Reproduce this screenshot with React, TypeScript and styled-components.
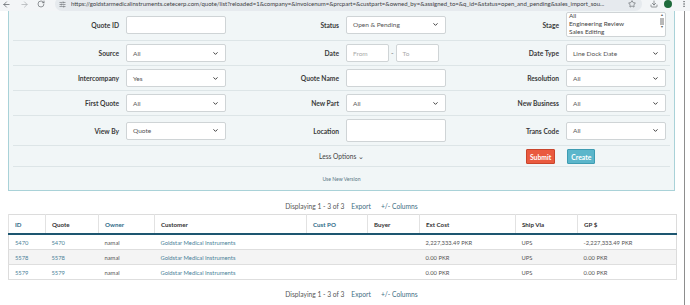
import React from 'react';
import styled, { createGlobalStyle } from 'styled-components';
import { ArrowLeft, ArrowRight, RotateCw, SlidersHorizontal, Star, Download, EllipsisVertical, ChevronDown } from 'lucide-react';

const GlobalStyle = createGlobalStyle`
  body {
    margin: 0;
    background: #ffffff;
    font-family: Lato, "Liberation Sans", sans-serif;
    color: #333333;
  }
`;

const LINK = '#2f6b88';

const Page = styled.div`
  width: 690px;
  height: 305px;
  overflow: hidden;
  background: #ffffff;
`;

const BrowserBar = styled.div`
  height: 11px;
  overflow: hidden;
  background: #f3f5f7;
`;

const BarInner = styled.div`
  height: 14px;
  margin-top: -3px;
  display: flex;
  align-items: center;
  padding: 0 2px;
  color: #5f6368;
`;

const NavIcon = styled.span<{ $gap?: number; $faded?: boolean }>`
  display: flex;
  margin-right: ${p => p.$gap ?? 8}px;
  opacity: ${p => (p.$faded ? 0.45 : 1)};
`;

const UrlPill = styled.div`
  width: 596px;
  height: 14px;
  margin-left: 4px;
  border-radius: 7px;
  background: #e6eaee;
  display: flex;
  align-items: center;
  padding: 0 6px 0 4px;
  box-sizing: border-box;
`;

const UrlText = styled.span`
  flex: 1;
  margin-left: 5px;
  font-size: 6px;
  line-height: 8px;
  color: #3c4043;
  white-space: nowrap;
  overflow: hidden;
`;

const Avatar = styled.span`
  width: 8px;
  height: 8px;
  border-radius: 50%;
  background: #1f6b3c;
  margin: 0 8px 0 6px;
`;

const Body = styled.div`
  display: flex;
`;

const Main = styled.div`
  width: 685px;
  height: 294px;
  border-right: 1px solid #8d8d8d;
  padding: 0 9px 0 8px;
  box-sizing: border-box;
`;

const FilterPanel = styled.div`
  background: #f1f6f7;
  border: 1px solid #a9d2d8;
  border-top: none;
  padding: 0 4px;
`;

const FilterRow = styled.div<{ $pad?: string }>`
  display: grid;
  grid-template-columns: 1fr 100px 1fr 100px 1fr 100px;
  column-gap: 7px;
  align-items: center;
  padding: ${p => p.$pad ?? '3px 4px 3px 0'};
  border-bottom: 1px solid #dde5e7;
`;

const Label = styled.label`
  text-align: right;
  font-size: 6.7px;
  font-weight: 700;
  color: #3a3a3a;
`;

const Box = styled.div<{ $h?: number }>`
  height: ${p => p.$h ?? 18}px;
  background: #ffffff;
  border: 1px solid #cfd4d6;
  border-radius: 2px;
  box-sizing: border-box;
  display: flex;
  align-items: center;
  padding: 0 6px;
  font-size: 6.5px;
  color: #555555;
`;

const SelectBox = styled(Box)`
  justify-content: space-between;
`;

const DateRange = styled.div`
  display: flex;
  align-items: center;
  gap: 2px;
  font-size: 7px;
  color: #777;
`;

const DateInput = styled(Box)`
  width: 43px;
  color: #a9a9a9;
`;

const ListBox = styled.div`
  height: 25px;
  background: #ffffff;
  border: 1px solid #cfd4d6;
  border-radius: 2px;
  box-sizing: border-box;
  display: flex;
  font-size: 6.4px;
  color: #444;
`;

const ListItems = styled.div`
  flex: 1;
  padding: 0 2px;
  line-height: 8px;
  margin-top: -1px;
`;

const ScrollBar = styled.div`
  width: 6px;
  display: flex;
  flex-direction: column;
  align-items: center;
  font-size: 3.5px;
  color: #666;
  line-height: 5px;
`;

const ScrollThumb = styled.div`
  width: 4px;
  height: 7px;
  background: #b8b8b8;
`;

const ActionRow = styled.div`
  display: grid;
  grid-template-columns: 1fr auto 1fr;
  align-items: center;
  padding: 3px 0 2px;
  border-bottom: 1px solid #dde5e7;
`;

const LessOptions = styled.span`
  grid-column: 2;
  font-size: 6.6px;
  color: #444;
`;

const Buttons = styled.div`
  display: flex;
  gap: 12px;
  padding-left: 162px;
`;

const Button = styled.button<{ $color: string; $border: string }>`
  height: 15px;
  padding: 0 3px;
  border: 1px solid ${p => p.$border};
  background: ${p => p.$color};
  color: #ffffff;
  font-family: inherit;
  font-size: 6.8px;
  font-weight: 700;
  border-radius: 1px;
`;

const VersionRow = styled.div`
  height: 23px;
  display: flex;
  align-items: center;
  justify-content: center;
  font-size: 5.1px;
  color: #5a7886;
`;

const Pager = styled.div<{ $top: number }>`
  margin-top: ${p => p.$top}px;
  height: 12px;
  display: flex;
  justify-content: center;
  align-items: center;
  padding-left: 20px;
  font-size: 6.7px;
  color: #555;
`;

const PagerLink = styled.span<{ $gap: number }>`
  margin-left: ${p => p.$gap}px;
  color: #3f6e84;
`;

const Table = styled.table`
  width: 100%;
  margin-top: 2px;
  border-collapse: collapse;
  table-layout: fixed;
  border: 1px solid #dcdcdc;
`;

const Col = styled.col<{ $w: number }>`
  width: ${p => p.$w}px;
`;

const Th = styled.th<{ $link?: boolean }>`
  height: 18px;
  padding: 0 0 0 6px;
  text-align: left;
  font-size: 6.2px;
  font-weight: 700;
  color: ${p => (p.$link ? LINK : '#333')};
  border-left: 1px solid #e2e2e2;
  border-bottom: 2px solid #1d5670;
`;

const Tr = styled.tr<{ $alt?: boolean }>`
  background: ${p => (p.$alt ? '#f4f4f4' : '#ffffff')};
  border-bottom: 1px solid #dedede;
`;

const Td = styled.td<{ $link?: boolean }>`
  height: 14px;
  padding: 0 0 0 6px;
  font-size: 5.8px;
  color: ${p => (p.$link ? '#4a7f98' : '#555')};
  white-space: nowrap;
`;

const columns = [
  { name: 'ID', w: 37, link: true },
  { name: 'Quote', w: 53 },
  { name: 'Owner', w: 56, link: true },
  { name: 'Customer', w: 152 },
  { name: 'Cust PO', w: 61, link: true },
  { name: 'Buyer', w: 52 },
  { name: 'Ext Cost', w: 96 },
  { name: 'Ship Via', w: 62 },
  { name: 'GP $', w: 99 },
];

const rows = [
  { id: '5470', cost: '2,227,333.49 PKR', gp: '-2,227,333.49 PKR' },
  { id: '5578', cost: '0.00 PKR', gp: '0.00 PKR' },
  { id: '5579', cost: '0.00 PKR', gp: '0.00 PKR' },
];

const Select = ({ value }: { value: string }) => (
  <SelectBox>
    <span>{value}</span>
    <ChevronDown size={7} strokeWidth={3.2} color="#333" />
  </SelectBox>
);

const PagerLine = ({ top }: { top: number }) => (
  <Pager $top={top}>
    Displaying 1 - 3 of 3
    <PagerLink $gap={7}>Export</PagerLink>
    <PagerLink $gap={10}>+/- Columns</PagerLink>
  </Pager>
);

export default function App() {
  return (
    <Page>
      <GlobalStyle />
      <BrowserBar>
        <BarInner>
          <NavIcon $gap={9}><ArrowLeft size={9} /></NavIcon>
          <NavIcon $gap={8} $faded><ArrowRight size={9} /></NavIcon>
          <NavIcon $gap={6}><RotateCw size={8} /></NavIcon>
          <UrlPill>
            <SlidersHorizontal size={7} />
            <UrlText>
              https://goldstarmedicalinstruments.cetecerp.com/quote/list?reloaded=1&amp;company=&amp;invoicenum=&amp;prcpart=&amp;custpart=&amp;owned_by=&amp;assigned_to=&amp;q_id=&amp;status=open_and_pending&amp;sales_import_sou...
            </UrlText>
            <Star size={8} />
          </UrlPill>
          <NavIcon $gap={0} style={{ marginLeft: 8 }}><Download size={8} /></NavIcon>
          <Avatar />
          <EllipsisVertical size={8} />
        </BarInner>
      </BrowserBar>
      <Body>
        <Main>
          <FilterPanel>
            <FilterRow $pad="1px 4px 3px 0">
              <Label>Quote ID</Label>
              <Box />
              <Label>Status</Label>
              <Select value="Open & Pending" />
              <Label>Stage</Label>
              <ListBox>
                <ListItems>
                  <div>All</div>
                  <div>Engineering Review</div>
                  <div>Sales Editing</div>
                </ListItems>
                <ScrollBar>
                  <span>▲</span>
                  <ScrollThumb />
                  <span>▼</span>
                </ScrollBar>
              </ListBox>
            </FilterRow>
            <FilterRow>
              <Label>Source</Label>
              <Select value="All" />
              <Label>Date</Label>
              <DateRange>
                <DateInput>From</DateInput>
                <span>-</span>
                <DateInput>To</DateInput>
              </DateRange>
              <Label>Date Type</Label>
              <Select value="Line Dock Date" />
            </FilterRow>
            <FilterRow>
              <Label>Intercompany</Label>
              <Select value="Yes" />
              <Label>Quote Name</Label>
              <Box />
              <Label>Resolution</Label>
              <Select value="All" />
            </FilterRow>
            <FilterRow>
              <Label>First Quote</Label>
              <Select value="All" />
              <Label>New Part</Label>
              <Select value="All" />
              <Label>New Business</Label>
              <Select value="All" />
            </FilterRow>
            <FilterRow>
              <Label>View By</Label>
              <Select value="Quote" />
              <Label>Location</Label>
              <Box $h={23} />
              <Label>Trans Code</Label>
              <Select value="All" />
            </FilterRow>
            <ActionRow>
              <LessOptions>Less Options ⌄</LessOptions>
              <Buttons>
                <Button $color="#ea5a3f" $border="#c9452c">Submit</Button>
                <Button $color="#5bb6cb" $border="#3e9cb2">Create</Button>
              </Buttons>
            </ActionRow>
            <VersionRow>Use New Version</VersionRow>
          </FilterPanel>
          <PagerLine top={9} />
          <Table>
            <colgroup>
              {columns.map(c => <Col key={c.name} $w={c.w} />)}
            </colgroup>
            <thead>
              <tr>
                {columns.map(c => <Th key={c.name} $link={c.link}>{c.name}</Th>)}
              </tr>
            </thead>
            <tbody>
              {rows.map((r, i) => (
                <Tr key={r.id} $alt={i === 1}>
                  <Td $link>{r.id}</Td>
                  <Td $link>{r.id}</Td>
                  <Td>namal</Td>
                  <Td $link>Goldstar Medical Instruments</Td>
                  <Td />
                  <Td />
                  <Td>{r.cost}</Td>
                  <Td>UPS</Td>
                  <Td>{r.gp}</Td>
                </Tr>
              ))}
            </tbody>
          </Table>
          <PagerLine top={8} />
        </Main>
      </Body>
    </Page>
  );
}
